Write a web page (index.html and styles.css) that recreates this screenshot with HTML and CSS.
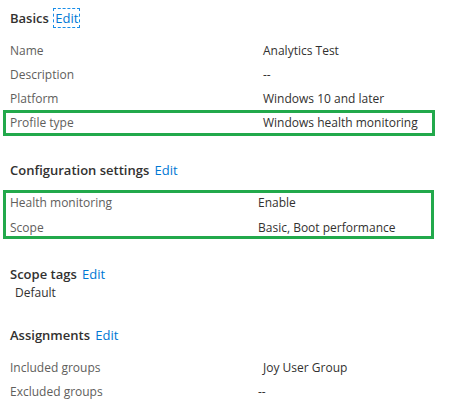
FILE: index.html
```html
<!DOCTYPE html>
<html lang="en">
<head>
    <meta charset="UTF-8">
    <meta name="viewport" content="width=device-width, initial-scale=1.0">
    <title>Profile summary</title>
    <link rel="stylesheet" href="styles.css">
</head>
<body>
    <div class="section basics">
        <h2 class="title">Basics <a class="edit focused" href="#">Edit</a></h2>
        <div class="rows">
            <div class="row"><span class="label">Name</span><span class="value">Analytics Test</span></div>
            <div class="row"><span class="label">Description</span><span class="value">--</span></div>
            <div class="row"><span class="label">Platform</span><span class="value">Windows 10 and later</span></div>
            <div class="row boxed"><span class="label">Profile type</span><span class="value">Windows health monitoring</span></div>
        </div>
    </div>

    <div class="section config">
        <h2 class="title">Configuration settings <a class="edit" href="#">Edit</a></h2>
        <div class="rows box">
            <div class="row"><span class="label">Health monitoring</span><span class="value">Enable</span></div>
            <div class="row"><span class="label">Scope</span><span class="value">Basic, Boot performance</span></div>
        </div>
    </div>

    <div class="section tags">
        <h2 class="title">Scope tags <a class="edit" href="#">Edit</a></h2>
        <div class="tag">Default</div>
    </div>

    <div class="section assignments">
        <h2 class="title">Assignments <a class="edit" href="#">Edit</a></h2>
        <div class="rows">
            <div class="row"><span class="label">Included groups</span><span class="value">Joy User Group</span></div>
            <div class="row"><span class="label">Excluded groups</span><span class="value dash">--</span></div>
        </div>
    </div>
</body>
</html>
```

FILE: styles.css
```css
body {
    margin: 0;
    padding: 0 10px;
    background: #fff;
    font-family: "Open Sans", "Noto Sans", sans-serif;
    font-size: 12px;
    color: #323130;
}
.title {
    margin: 0;
    height: 20px;
    line-height: 20px;
    font-size: 13px;
    font-weight: 600;
    color: #323130;
}
.edit {
    font-weight: 400;
    color: #0078d4;
    text-decoration: none;
    margin-left: 2px;
}
.edit.focused {
    outline: 1px dashed #1a8ee8;
    outline-offset: 0;
    padding: 0 1px;
}
.basics {
    padding-top: 8px;
}
.basics .rows {
    margin-top: 11px;
}
.row {
    display: flex;
    height: 24px;
    line-height: 24px;
}
.label {
    width: 253px;
    flex: none;
    color: #605e5c;
}
.value {
    color: #323130;
}
.row.boxed {
    height: 26px;
    line-height: 20px;
    margin: -1px 0 0 -7px;
    width: 432px;
    box-sizing: border-box;
    border: 3px solid #22a94b;
    padding-left: 4px;
}
.config {
    margin-top: 24px;
}
.box {
    margin: 10px 0 0 -7px;
    width: 431px;
    height: 49px;
    box-sizing: border-box;
    border: 3px solid #22a94b;
    padding-left: 4px;
    display: flex;
    flex-direction: column;
    gap: 5px;
}
.box .row {
    height: 20px;
    line-height: 20px;
}
.box .label {
    width: 248px;
}
.tags {
    margin-top: 25px;
}
.tag {
    line-height: 18px;
    padding-left: 5px;
}
.assignments {
    margin-top: 23px;
}
.assignments .rows {
    margin-top: 11px;
}
.value.dash {
    margin-left: -5px;
}
```
